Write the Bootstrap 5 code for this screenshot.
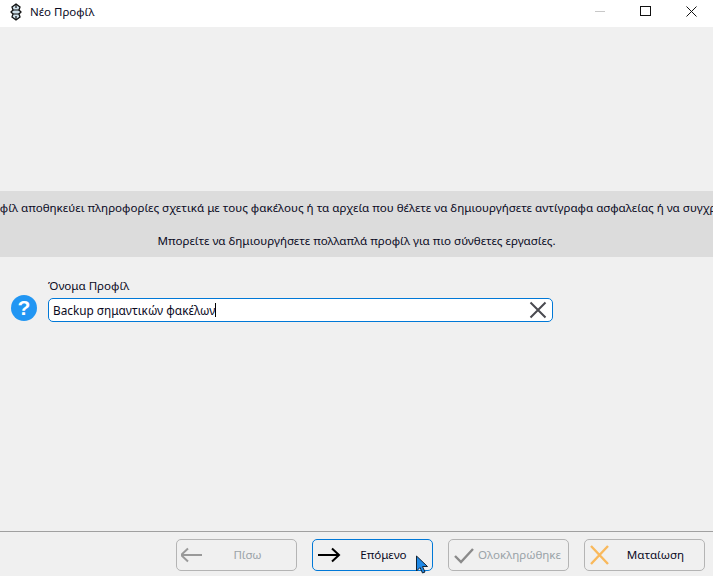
<!DOCTYPE html>
<html lang="el">
<head>
<meta charset="utf-8">
<title>Νέο Προφίλ</title>
<link href="https://cdn.jsdelivr.net/npm/bootstrap@5.3.0/dist/css/bootstrap.min.css" rel="stylesheet">
<style>
html,body{height:576px;overflow:hidden}
body{background:#f0f0f0;font-family:"Noto Sans","DejaVu Sans",sans-serif;font-size:11.6px;color:#0a0a1e;line-height:16px}
.app-win{height:576px;width:713px;overflow:hidden}
.title-strip{height:27px;background:#fff;flex:none;padding-bottom:4px}
.title-txt{margin-left:6px;font-size:11.5px}
.win-btns{margin-left:auto;margin-right:-1px}
.win-btn{width:46px;height:22px}
.top-gap{height:164px;flex:none}
.info-band{height:66px;background:#dcdcdc;flex:none;overflow:hidden}
.info-line{height:33px;white-space:nowrap}
.form-zone{padding:21px 0 0 11px}
.q-badge{width:26px;height:26px;margin-top:17px;flex:none}
.field-col{margin-left:11px;width:505px}
.field-cap{height:20px}
.name-box{height:24px;width:505px;border:1px solid #0078d7;border-radius:5px;background:#fff;padding:0 5px 0 4px}
.name-val{font-size:11.8px;border-right:1px solid #000;line-height:14px}
.foot-bar{margin-top:auto;height:45px;border-top:1px solid #a0a0a0;flex:none;padding:7px 8px 0 0;gap:15px}
.act-btn{width:121px;height:32px;border:1px solid #0078d7;border-radius:5px;background:#f0f0f0;padding:0 0 0 4px;flex:none;font-size:11.6px;color:#0a0a1e;line-height:16px}
.act-off{border-color:#b4b4b4;color:#9aa3a8}
.act-plain{border-color:#b4b4b4}
.act-label{flex:1;min-width:0;text-align:center;white-space:nowrap;overflow:hidden;margin-right:6px}
.ptr{position:absolute;left:415px;top:555px}
</style>
</head>
<body>
<div class="app-win d-flex flex-column position-relative">
  <div class="title-strip d-flex align-items-center ps-2">
    <svg width="16" height="18" viewBox="0 0 16 18" aria-hidden="true"><path d="M8 1 L12 4 L11 7 L13 9 L11 11 L12 14 L8 17 L4 14 L5 11 L3 9 L5 7 L4 4Z" fill="#cfe0ea" stroke="#111" stroke-width="1.3"/><path d="M5 7H11M5 11H11M8 1V5M8 13V17" stroke="#111" stroke-width="1.2"/></svg>
    <span class="title-txt">Νέο Προφίλ</span>
    <div class="win-btns d-flex">
      <div class="win-btn d-flex align-items-center justify-content-center"><svg width="12" height="11" viewBox="0 0 12 11"><path d="M2 5.500H12" stroke="#c8c8c8" fill="none"/></svg></div>
      <div class="win-btn d-flex align-items-center justify-content-center"><svg width="11" height="11" viewBox="0 0 11 11"><rect x=".5" y=".5" width="10" height="9" fill="none" stroke="#111"/></svg></div>
      <div class="win-btn d-flex align-items-center justify-content-center"><svg width="11" height="11" viewBox="0 0 11 11"><path d="M.5.5L10.500 10.500M10.500.5L.5 10.500" stroke="#111" fill="none"/></svg></div>
    </div>
  </div>
  <div class="top-gap"></div>
  <div class="info-band">
    <div class="info-line d-flex align-items-center justify-content-center">Ένα προφίλ αποθηκεύει πληροφορίες σχετικά με τους φακέλους ή τα αρχεία που θέλετε να δημιουργήσετε αντίγραφα ασφαλείας ή να συγχρονίσετε.</div>
    <div class="info-line d-flex align-items-center justify-content-center">Μπορείτε να δημιουργήσετε πολλαπλά προφίλ για πιο σύνθετες εργασίες.</div>
  </div>
  <div class="form-zone d-flex">
    <svg class="q-badge" viewBox="0 0 26 26" aria-hidden="true"><circle cx="13" cy="13" r="13" fill="#2196f3"/><text x="13" y="20" text-anchor="middle" font-family="Liberation Sans" font-weight="700" font-size="21" fill="#fff">?</text></svg>
    <div class="field-col">
      <div class="field-cap">Όνομα Προφίλ</div>
      <div class="name-box d-flex align-items-center">
        <span class="name-val">Backup σημαντικών φακέλων</span>
        <svg class="ms-auto" width="18" height="18" viewBox="0 0 18 18" aria-hidden="true"><path d="M1.500 1.500L16.500 16.500M16.500 1.500L1.500 16.500" stroke="#4a4a50" stroke-width="2" fill="none"/></svg>
      </div>
    </div>
  </div>
  <div class="foot-bar d-flex justify-content-end">
    <button type="button" class="act-btn act-off d-flex align-items-center" disabled>
      <svg width="24" height="16" viewBox="0 0 24 16" aria-hidden="true"><path d="M21 8H0M7 1.500L0 8l7 6.500" stroke="#999" stroke-width="2" fill="none"/></svg>
      <span class="act-label">Πίσω</span>
    </button>
    <button type="button" class="act-btn d-flex align-items-center">
      <svg width="24" height="16" viewBox="0 0 24 16" aria-hidden="true"><path d="M1 8H22M15 1.500L22 8l-7 6.500" stroke="#000" stroke-width="2" fill="none"/></svg>
      <span class="act-label">Επόμενο</span>
    </button>
    <button type="button" class="act-btn act-off d-flex align-items-center" disabled>
      <svg width="24" height="20" viewBox="0 0 24 20" aria-hidden="true"><path d="M2 11l6 6L20 4" stroke="#8a8a8a" stroke-width="2.4" fill="none"/></svg>
      <span class="act-label">Ολοκληρώθηκε</span>
    </button>
    <button type="button" class="act-btn act-plain d-flex align-items-center">
      <svg width="24" height="20" viewBox="0 0 24 20" aria-hidden="true"><path d="M2 1L19 19M19 1L2 19" stroke="#f9b95c" stroke-width="2.4" fill="none"/></svg>
      <span class="act-label">Ματαίωση</span>
    </button>
  </div>
  <svg class="ptr" width="14" height="20" viewBox="0 0 14 20" aria-hidden="true"><path d="M1.500 1V16L5 12.500 7.500 18 10 17 7.500 11.500H12.500Z" fill="#1e88e5" stroke="#123" stroke-width="1"/></svg>
</div>
<script src="https://cdn.jsdelivr.net/npm/bootstrap@5.3.0/dist/js/bootstrap.bundle.min.js"></script>
</body>
</html>
